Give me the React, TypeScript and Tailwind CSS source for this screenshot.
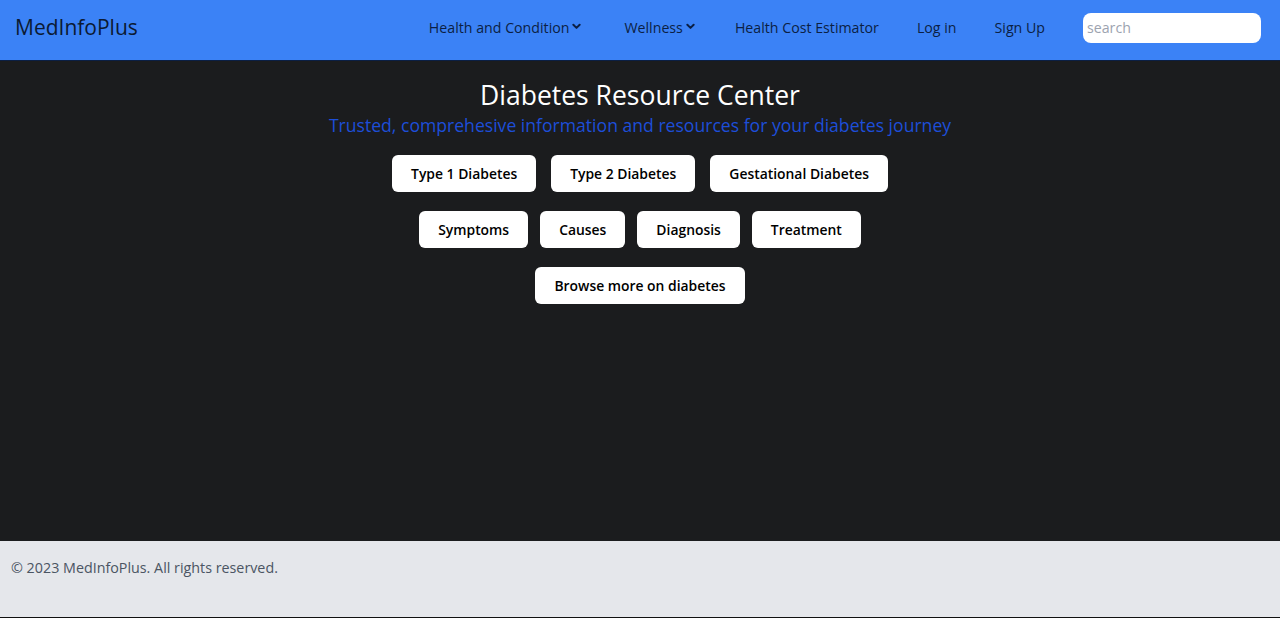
import React from "react";

const Chevron = () => (
  <svg width="9" height="7" viewBox="0 0 10 7" className="ml-[3px] mt-[-2px]">
    <path d="M1.5 1.5 L5 5 L8.5 1.5" stroke="#0b1f44" strokeWidth="2.2" fill="none" strokeLinecap="round" strokeLinejoin="round" />
  </svg>
);

const Btn = ({ children }: { children: React.ReactNode }) => (
  <button className="h-[37px] rounded-md bg-white px-[19px] pt-[2px] text-[13.9px] font-semibold text-black">
    {children}
  </button>
);

export default function App() {
  return (
    <div className="flex min-h-[618px] flex-col bg-[#1b1c1e]" style={{ fontFamily: '"Open Sans", "Noto Sans", sans-serif' }}>
      <nav className="flex h-[61px] items-center border-b border-[#0b1f44] bg-[#3b82f6] pb-[5px] pl-[15px] pr-[19px]">
        <div className="text-[21px] text-[#0b1a33]">MedInfoPlus</div>
        <div className="ml-auto flex items-center text-[14.2px] text-[#0b1f44]">
          <div className="flex items-center">Health and Condition<Chevron /></div>
          <div className="ml-[43px] flex items-center">Wellness<Chevron /></div>
          <div className="ml-[40px]">Health Cost Estimator</div>
          <div className="ml-[38px]">Log in</div>
          <div className="ml-[38px]">Sign Up</div>
          <input
            placeholder="search"
            className="ml-[38px] h-[30px] w-[178px] rounded-lg bg-white px-[4px] text-[14.2px] outline-none placeholder:text-[#9ca3af]"
          />
        </div>
      </nav>
      <main className="flex flex-1 flex-col items-center pt-[16px]">
        <h1 className="text-[26.5px] leading-[36px] text-white">Diabetes Resource Center</h1>
        <p className="text-[17.6px] leading-[24px] text-[#1d4ed8]">Trusted, comprehesive information and resources for your diabetes journey</p>
        <div className="mt-[18px] flex gap-[15px]">
          <Btn>Type 1 Diabetes</Btn>
          <Btn>Type 2 Diabetes</Btn>
          <Btn>Gestational Diabetes</Btn>
        </div>
        <div className="mt-[19px] flex gap-[12px]">
          <Btn>Symptoms</Btn>
          <Btn>Causes</Btn>
          <Btn>Diagnosis</Btn>
          <Btn>Treatment</Btn>
        </div>
        <div className="mt-[19px] flex">
          <Btn>Browse more on diabetes</Btn>
        </div>
      </main>
      <footer className="h-[77px] border-b border-[#111] bg-[#e5e7eb] px-[11px] pt-[16px] text-[14.3px] text-[#4b5563]">
        © 2023 MedInfoPlus. All rights reserved.
      </footer>
    </div>
  );
}
